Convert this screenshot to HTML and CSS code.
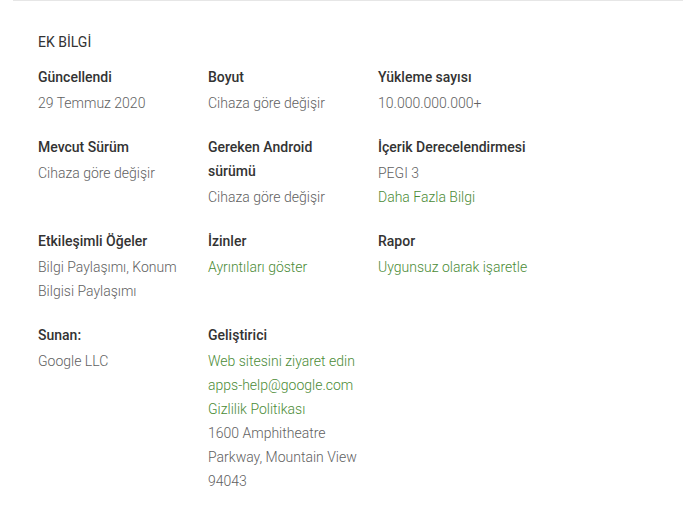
FILE: index.html
```html
<!DOCTYPE html>
<html lang="tr">

<head>
    <meta charset="UTF-8">
    <meta name="viewport" content="width=device-width, initial-scale=1.0">
    <title>Ek Bilgi</title>
    <link rel="stylesheet" href="styles.css">
</head>

<body>
    <div class="divider"></div>

    <section class="info">
        <h2 class="info-title">EK BİLGİ</h2>

        <div class="info-grid">
            <div class="info-item">
                <div class="info-label">Güncellendi</div>
                <div class="info-value">29 Temmuz 2020</div>
            </div>
            <div class="info-item">
                <div class="info-label">Boyut</div>
                <div class="info-value">Cihaza göre değişir</div>
            </div>
            <div class="info-item">
                <div class="info-label">Yükleme sayısı</div>
                <div class="info-value">10.000.000.000+</div>
            </div>

            <div class="info-item">
                <div class="info-label">Mevcut Sürüm</div>
                <div class="info-value">Cihaza göre değişir</div>
            </div>
            <div class="info-item">
                <div class="info-label">Gereken Android sürümü</div>
                <div class="info-value">Cihaza göre değişir</div>
            </div>
            <div class="info-item">
                <div class="info-label">İçerik Derecelendirmesi</div>
                <div class="info-value">PEGI 3</div>
                <div class="info-value"><a href="#">Daha Fazla Bilgi</a></div>
            </div>

            <div class="info-item">
                <div class="info-label">Etkileşimli Öğeler</div>
                <div class="info-value">Bilgi Paylaşımı, Konum Bilgisi Paylaşımı</div>
            </div>
            <div class="info-item">
                <div class="info-label">İzinler</div>
                <div class="info-value"><a href="#">Ayrıntıları göster</a></div>
            </div>
            <div class="info-item">
                <div class="info-label">Rapor</div>
                <div class="info-value"><a href="#">Uygunsuz olarak işaretle</a></div>
            </div>

            <div class="info-item">
                <div class="info-label">Sunan:</div>
                <div class="info-value">Google LLC</div>
            </div>
            <div class="info-item">
                <div class="info-label">Geliştirici</div>
                <div class="info-value"><a href="#">Web sitesini ziyaret edin</a></div>
                <div class="info-value"><a href="#">apps-help@google.com</a></div>
                <div class="info-value"><a href="#">Gizlilik Politikası</a></div>
                <div class="info-value">1600 Amphitheatre Parkway, Mountain View 94043</div>
            </div>
        </div>
    </section>
</body>

</html>
```

FILE: styles.css
```css
body {
    font-family: Roboto, Arial, sans-serif;
    margin: 0;
    background-color: #fff;
    color: #333;
}

.divider {
    border-top: 1px solid #e6e6e6;
    margin: 0 7px 0 13px;
}

.info {
    padding: 29px 0 0 38px;
}

.info-title {
    font-size: 14px;
    font-weight: 400;
    line-height: 24px;
    margin: 0 0 11px;
    color: #333;
}

.info-grid {
    display: grid;
    grid-template-columns: repeat(3, 170px);
    row-gap: 20px;
    align-items: start;
}

.info-item {
    padding-right: 20px;
}

.info-label {
    font-size: 14px;
    font-weight: 500;
    line-height: 24px;
    color: #333;
    margin-bottom: 2px;
}

.info-value {
    font-size: 14px;
    font-weight: 300;
    line-height: 24px;
    color: #616161;
}

.info-value a {
    color: #4b8b36;
    text-decoration: none;
}
```
